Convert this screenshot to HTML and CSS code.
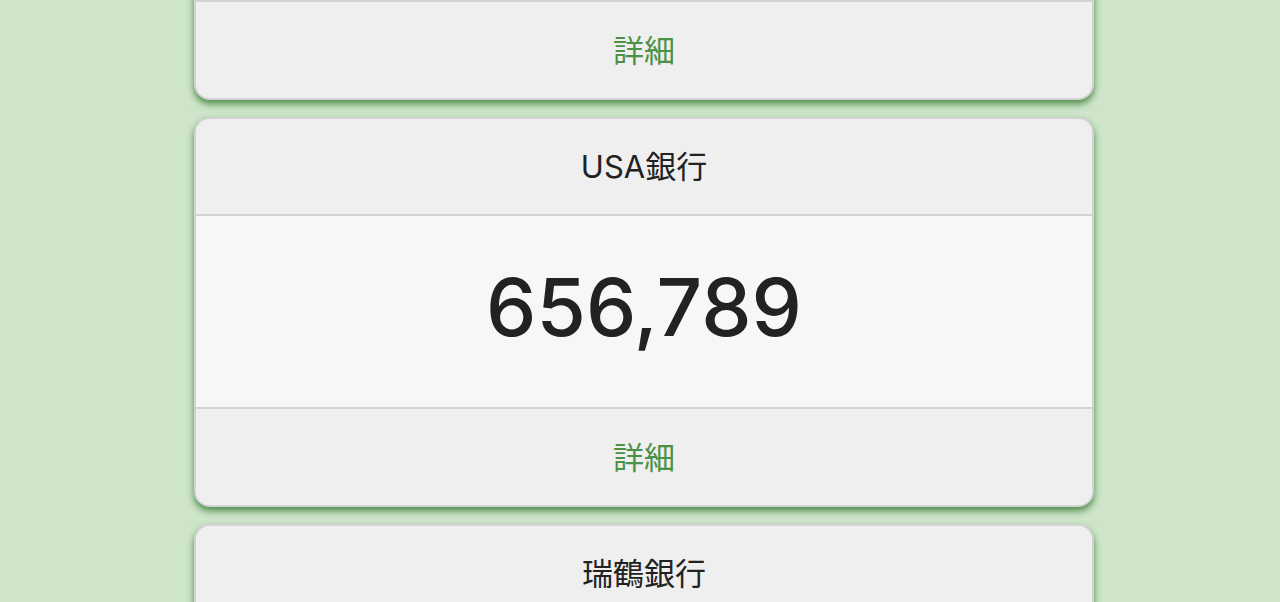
FILE: index.html
```html
<!DOCTYPE html>
<html lang="ja">
<head>
<meta charset="utf-8">
<title>銀行残高</title>
<link rel="stylesheet" href="styles.css">
</head>
<body>
<main class="page">
  <div class="list">
    <section class="card">
      <header class="card-head"><span class="label">みずほ銀行</span></header>
      <div class="card-body"><span class="amount">1,234,567</span></div>
      <footer class="card-foot"><a class="detail" href="#">詳細</a></footer>
    </section>
    <section class="card">
      <header class="card-head"><span class="label">USA銀行</span></header>
      <div class="card-body"><span class="amount">656,789</span></div>
      <footer class="card-foot"><a class="detail" href="#">詳細</a></footer>
    </section>
    <section class="card">
      <header class="card-head"><span class="label">瑞鶴銀行</span></header>
      <div class="card-body"><span class="amount">98,765</span></div>
      <footer class="card-foot"><a class="detail" href="#">詳細</a></footer>
    </section>
  </div>
</main>
</body>
</html>
```
FILE: styles.css
```css
html, body {
  margin: 0;
  padding: 0;
  background: #cee5ca;
  font-family: Inter, "Noto Sans CJK JP", sans-serif;
  color: #222;
  overflow: hidden;
}
.page {
  display: flex;
  justify-content: center;
  padding-left: 8px;
}
.list {
  width: 900px;
  display: flex;
  flex-direction: column;
  gap: 17px;
  margin-top: -290px;
}
.card {
  border: 2px solid #d3d3d3;
  border-radius: 16px;
  overflow: hidden;
  background: #efefef;
  box-shadow: 0 4px 7px rgba(55, 125, 50, 0.85);
}
.card-head,
.card-foot {
  display: flex;
  align-items: center;
  justify-content: center;
  background: #efefef;
  font-size: 31px;
  line-height: 1;
}
.card-head {
  height: 95px;
  border-bottom: 2px solid #d3d3d3;
}
.card-foot {
  height: 96px;
  border-top: 2px solid #d3d3d3;
}
.label,
.detail {
  display: block;
  line-height: 1;
  font-family: Inter, "Noto Sans CJK JP", sans-serif;
}
.card-body {
  height: 191px;
  display: flex;
  align-items: center;
  justify-content: center;
  background: #f7f7f7;
}
.amount {
  display: block;
  font-size: 80px;
  font-weight: 500;
  line-height: 1;
  padding-bottom: 10px;
}
.detail {
  color: #4b9146;
  text-decoration: none;
}
```
